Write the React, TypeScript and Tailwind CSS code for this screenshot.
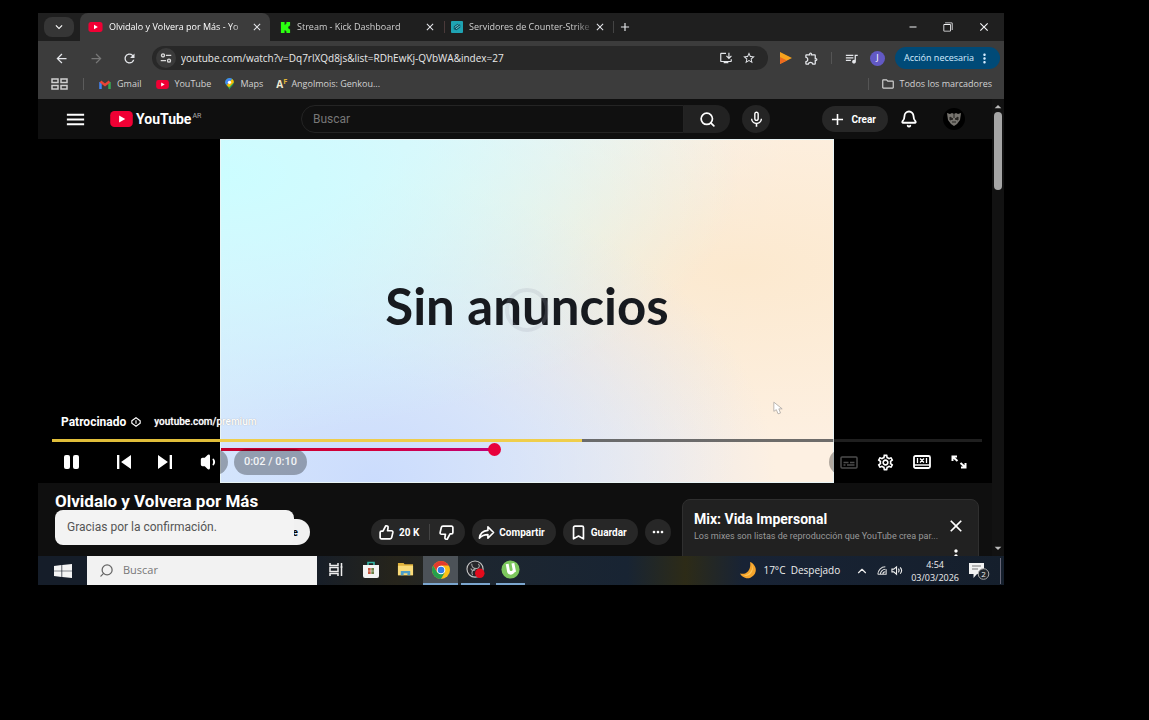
import type { ReactNode } from 'react'
import {
  MdAdd,
  MdArrowBack,
  MdArrowDropDown,
  MdArrowDropUp,
  MdArrowForward,
  MdClose,
  MdFilterNone,
  MdInstallDesktop,
  MdKeyboardArrowDown,
  MdMenu,
  MdMicNone,
  MdMoreHoriz,
  MdMoreVert,
  MdOutlineExtension,
  MdOutlineFolder,
  MdOutlineSettings,
  MdQueueMusic,
  MdRefresh,
  MdRemove,
  MdSkipNext,
  MdSkipPrevious,
  MdStarBorder,
} from 'react-icons/md'
import { Bell, Bookmark, ChevronUp, Search, Volume1 } from 'lucide-react'

function YouTubeMark({ className }: { className: string }) {
  return (
    <svg viewBox="0 0 24 17" className={className} aria-hidden="true">
      <rect width="24" height="17" rx="4.500" fill="#f00034" />
      <path d="M9.500 4.800v7.400L16 8.500z" fill="#fff" />
    </svg>
  )
}

function KickIcon() {
  return (
    <svg viewBox="0 0 12 12" className="size-[11px] shrink-0" aria-hidden="true">
      <path d="M1 0h4v3h1V2h1V0h4v4h-1v1H9v2h1v1h1v4H7v-2H6V9H5v3H1z" fill="#2bff10" />
    </svg>
  )
}

function ServerIcon() {
  return (
    <svg viewBox="0 0 13 13" className="size-3 shrink-0" aria-hidden="true">
      <rect width="13" height="13" rx="1" fill="#1fa3b3" />
      <path d="M3 6l4-3 3 1v3L6 10 3 9z" fill="#0a5263" />
      <path d="M4 7l4-3M5.500 8.500l4-3" stroke="#8be6ee" strokeWidth=".9" />
    </svg>
  )
}

function AppsIcon() {
  return (
    <svg viewBox="0 0 17 12" className="w-[17px]" fill="none" stroke="#d0d0d0" strokeWidth="1.500" aria-hidden="true">
      <path d="M1 1h6v3.500H1zM10 1h6v3.500h-6zM1 7.500h6V11H1zM10 7.500h6V11h-6z" />
    </svg>
  )
}

function TuneIcon() {
  return (
    <svg viewBox="0 0 16 16" className="size-3 shrink-0" fill="none" stroke="#dadada" strokeWidth="1.800" aria-hidden="true">
      <circle cx="4" cy="4.500" r="2" />
      <path d="M8 4.500h7M1 11.500h7" />
      <circle cx="12" cy="11.500" r="2" />
    </svg>
  )
}

function GmailIcon() {
  return (
    <svg viewBox="0 0 24 18" className="h-[9px] w-3" fill="none" strokeWidth="5" aria-hidden="true">
      <path d="M3 18V4" stroke="#4285f4" />
      <path d="M21 18V4" stroke="#34a853" />
      <path d="M3 3l9 7 9-7" stroke="#ea4335" />
    </svg>
  )
}

function MapsIcon() {
  return (
    <svg viewBox="0 0 16 22" className="h-3 w-[9px]" aria-hidden="true">
      <path d="M8 22C7 16 0 14 0 8a8 8 0 0 1 16 0c0 6-7 8-8 14z" fill="#34a853" />
      <path d="M0 8a8 8 0 0 1 13-6L3 13C1 11 0 10 0 8z" fill="#4285f4" />
      <path d="M3 13L13 2a8 8 0 0 1 3 6L7 17z" fill="#fbbc04" />
      <circle cx="8" cy="8" r="3" fill="#fff" />
    </svg>
  )
}

function ThumbIcon({ className = '' }: { className?: string }) {
  return (
    <svg viewBox="0 0 24 24" className={`size-[17px] ${className}`} fill="none" stroke="#fff" strokeWidth="2.400" strokeLinejoin="round" aria-hidden="true">
      <path d="M7 10l4-7.500c2.300-.3 3.600 1 3.200 3L13.500 9.500H19a2 2 0 0 1 2 2.400l-1.600 7a2.500 2.500 0 0 1-2.400 2H5a2 2 0 0 1-2-2V12a2 2 0 0 1 2-2z" />
    </svg>
  )
}

function ShareIcon() {
  return (
    <svg viewBox="0 0 24 24" className="size-[17px]" fill="none" stroke="#fff" strokeWidth="2.300" strokeLinejoin="round" aria-hidden="true">
      <path d="M14 4l8 8-8 8v-5c-5 0-8.500 1-12 5 .8-6.500 5-10.500 12-11z" />
    </svg>
  )
}

function CaptionsIcon() {
  return (
    <svg viewBox="0 0 18 13" className="w-[18px]" fill="none" stroke="#4c4c4c" strokeWidth="1.500" aria-hidden="true">
      <rect x="1" y="1" width="16" height="11" rx="1" />
      <path d="M3.500 6.500h5M10 6.500h4.500M3.500 9h2M7 9h7.500" />
    </svg>
  )
}

function TheaterIcon() {
  return (
    <svg viewBox="0 0 18 14" className="w-[18px]" fill="none" stroke="#fff" strokeWidth="1.800" aria-hidden="true">
      <rect x="1" y="1" width="16" height="12" rx="1.500" />
      <path d="M1 10h16" strokeWidth="1.400" />
      <path d="M4.500 3v5M13.500 3v5M7 3.500l4 4M11 3.500l-4 4" strokeWidth="1.300" />
    </svg>
  )
}

function FullscreenIcon() {
  return (
    <svg viewBox="0 0 16 14" className="w-4" fill="none" stroke="#fff" strokeWidth="2" aria-hidden="true">
      <path d="M1.500 6V1.500H6M2 2l4.500 4M14.500 8v4.500H10M14 12L9.500 8" />
    </svg>
  )
}

function WindowsIcon() {
  return (
    <svg viewBox="0 0 18 14" className="w-[18px]" fill="#f4f4f4" aria-hidden="true">
      <path d="M0 2l7.500-1v5.700H0zM8.200.9L18 0v6.700H8.200zM0 7.300h7.500V13L0 12zM8.200 7.300H18V14l-9.800-.9z" />
    </svg>
  )
}

function TaskViewIcon() {
  return (
    <svg viewBox="0 0 14 13" className="w-[14px]" fill="none" stroke="#eee" strokeWidth="1.500" aria-hidden="true">
      <path d="M1 0v2.500h8V0M1 13v-2.500h8V13M12.500 0v13M11.500 4h2" />
      <rect x="1" y="4.500" width="8" height="4" />
    </svg>
  )
}

function StoreIcon() {
  return (
    <svg viewBox="0 0 18 18" className="size-[18px]" aria-hidden="true">
      <path d="M6 5V1.500h6V5" fill="none" stroke="#35b5a5" strokeWidth="1.600" />
      <path d="M1 4h16v11q0 2-2 2H3q-2 0-2-2z" fill="#f3f3f3" />
      <path d="M6 7h2.700v2.700H6zM6 10.300h2.700V13H6z" fill="#c8553d" />
      <path d="M9.300 7H12v2.700H9.300zM9.300 10.300H12V13H9.300z" fill="#6b7f45" />
    </svg>
  )
}

function ExplorerIcon() {
  return (
    <svg viewBox="0 0 18 15" className="w-[17px]" aria-hidden="true">
      <path d="M1 1h6l1 1.500h9V14H1z" fill="#e0b33c" />
      <path d="M1 4h16v10H1z" fill="#fadb78" />
      <path d="M4 9.500h10V14h-3v-2H7v2H4z" fill="#4f9fc8" />
    </svg>
  )
}

function ChromeIcon() {
  return (
    <svg viewBox="0 0 20 20" className="size-[18px]" aria-hidden="true">
      <circle cx="10" cy="10" r="10" fill="#fbc116" />
      <path d="M1.340 5A10 10 0 0 1 18.660 5H10L6 12.500z" fill="#e33b2e" />
      <path d="M1.340 5A10 10 0 0 0 10 20l4.300-7.500L10 14.500 5.700 12.500z" fill="#269f4c" />
      <circle cx="10" cy="10" r="4.800" fill="#fff" />
      <circle cx="10" cy="10" r="3.700" fill="#2f7de8" />
    </svg>
  )
}

function ObsIcon() {
  return (
    <svg viewBox="0 0 20 20" className="size-[19px]" aria-hidden="true">
      <circle cx="9.500" cy="9.500" r="8.500" fill="#26262a" stroke="#c4c4c4" strokeWidth="1.200" />
      <path d="M6 4c0 4 2 5 5 5 3 0 4-3 2-5M10 9c-3 1-5 4-3 7M5 9c1 2 3 3 5 1" fill="none" stroke="#a8a8a8" strokeWidth="1.100" />
      <circle cx="14.500" cy="14" r="5" fill="#e30b1c" />
    </svg>
  )
}

function TorrentIcon() {
  return (
    <svg viewBox="0 0 20 20" className="size-[19px]" aria-hidden="true">
      <circle cx="10" cy="10" r="9.500" fill="#7cc75d" />
      <path d="M5 4.500l3-.6 1.200 6.600c.3 1.700 3.300 1.200 3-.6L11 3.600l3-.5 1.800 8.900-2 1.500c-1 2.500-6.300 3-7.300-.8z" fill="#fff" />
    </svg>
  )
}

function MoonIcon() {
  return (
    <svg viewBox="0 0 17 17" className="size-[17px]" aria-hidden="true">
      <path d="M10 0a8.300 8.300 0 1 1-10 11.500C7 13.500 11.500 7 10 0z" fill="#f6a52c" />
      <path d="M11.500 1c3 6-2 12-8 12.500 7 2.500 12-6 8-12.500z" fill="#ffc85a" />
    </svg>
  )
}

function NetworkIcon() {
  return (
    <svg viewBox="0 0 12 11" className="w-[10px]" fill="none" stroke="#ddd" strokeWidth="1.300" aria-hidden="true">
      <path d="M1 10a9 9 0 0 1 9-9M4 10a6 6 0 0 1 6-6M7 10a3 3 0 0 1 3-3M1 10h10V4" />
    </svg>
  )
}

function SpeakerIcon() {
  return (
    <svg viewBox="0 0 13 12" className="w-3" fill="none" stroke="#eee" strokeWidth="1.200" aria-hidden="true">
      <path d="M1 4.500h2L6 2v8L3 7.500H1zM8 4q1.500 2 0 4M10 2.500q3 3.500 0 7" />
    </svg>
  )
}

function NoticeIcon() {
  return (
    <svg viewBox="0 0 21 18" className="w-[21px]" aria-hidden="true">
      <path d="M0 1h15v11H8l-3.500 4v-4H0z" fill="#f2f2f2" />
      <path d="M3 4h9M3 7h6" stroke="#777" />
      <circle cx="14.500" cy="12" r="5.300" fill="#20262c" stroke="#a8a8a8" />
      <text x="12.300" y="15" fontSize="8" fill="#eee" fontFamily="Open Sans">2</text>
    </svg>
  )
}

interface TabProps {
  icon: ReactNode
  title: string
  className?: string
}

function Tab({ icon, title, className = '' }: TabProps) {
  return (
    <div className={`flex h-[28px] items-center ${className}`}>
      <button type="button" className="flex min-w-0 flex-1 items-center gap-[6px]">
        {icon}
        <span className="min-w-0 flex-1 overflow-hidden text-left whitespace-nowrap [mask-image:linear-gradient(to_right,black_85%,transparent)]">
          {title}
        </span>
      </button>
      <button type="button" aria-label="Cerrar pestaña" className="text-xs text-gray-200">
        <MdClose />
      </button>
    </div>
  )
}

function TabStrip() {
  return (
    <div className="flex h-[28px] items-center bg-[#1f1f1f] text-[9px] text-[#cfcfcf]">
      <button type="button" aria-label="Buscar pestañas" className="ml-[6px] flex h-5 w-[30px] items-center justify-center rounded-lg bg-[#363636] text-sm text-white">
        <MdKeyboardArrowDown />
      </button>
      <Tab
        icon={<YouTubeMark className="h-[10px] w-[15px] shrink-0" />}
        title="Olvidalo y Volvera por Más - Yo"
        className="ml-[6px] w-[190px] rounded-t-lg bg-[#3c3c3c] pr-[7px] pl-2 text-white"
      />
      <Tab icon={<KickIcon />} title="Stream - Kick Dashboard" className="w-[174px] pr-2 pl-[10px]" />
      <span className="h-3 w-px bg-[#4a3a3a]" />
      <Tab icon={<ServerIcon />} title="Servidores de Counter-Strike 1" className="w-[168px] pr-[7px] pl-[6px]" />
      <span className="h-3 w-px bg-[#444]" />
      <button type="button" aria-label="Nueva pestaña" className="ml-1 text-sm text-gray-200">
        <MdAdd />
      </button>
      <div className="ml-auto flex items-center gap-6 pr-[13px] text-xs text-gray-100">
        <button type="button" aria-label="Minimizar"><MdRemove /></button>
        <button type="button" aria-label="Restaurar" className="rotate-180 text-[10px]"><MdFilterNone stroke="currentColor" /></button>
        <button type="button" aria-label="Cerrar" className="text-sm"><MdClose /></button>
      </div>
    </div>
  )
}

function Toolbar() {
  return (
    <div className="flex h-[34px] items-center bg-[#3c3c3c] pr-1 pl-4 text-[15px] text-gray-200">
      <button type="button" aria-label="Atrás"><MdArrowBack /></button>
      <button type="button" aria-label="Adelante" className="ml-5 text-[#777]"><MdArrowForward /></button>
      <button type="button" aria-label="Recargar" className="ml-[18px]"><MdRefresh /></button>
      <div className="ml-[15px] flex h-6 flex-1 items-center rounded-full bg-[#282828] pr-3 pl-1">
        <span className="flex size-5 items-center justify-center rounded-full bg-[#3a3a3a]"><TuneIcon /></span>
        <input
          aria-label="Dirección"
          defaultValue="youtube.com/watch?v=Dq7rlXQd8js&list=RDhEwKj-QVbWA&index=27"
          className="ml-[5px] min-w-0 flex-1 bg-transparent text-[10px] text-[#e8e8e8] outline-none"
        />
        <button type="button" aria-label="Instalar YouTube" className="text-sm"><MdInstallDesktop /></button>
        <button type="button" aria-label="Añadir a marcadores" className="ml-[9px] text-sm"><MdStarBorder /></button>
      </div>
      <button type="button" aria-label="Extensión de vídeo" className="ml-3">
        <svg viewBox="0 0 12 12" className="size-3" aria-hidden="true">
          <path d="M0 0l12 6-12 6z" fill="#f6a21e" />
          <path d="M0 12V5l7 3.500z" fill="#ee6a1e" />
        </svg>
      </button>
      <button type="button" aria-label="Extensiones" className="ml-3"><MdOutlineExtension /></button>
      <span className="ml-3 h-3 w-px bg-[#555]" />
      <button type="button" aria-label="Controles multimedia" className="ml-3"><MdQueueMusic /></button>
      <button type="button" aria-label="Perfil" className="ml-[11px] flex size-[15px] items-center justify-center rounded-full bg-[#6259c4] text-[9px] text-white">J</button>
      <button type="button" className="ml-[10px] flex h-[22px] w-[105px] items-center justify-between rounded-full bg-[#004a77] pr-2 pl-[9px] text-[9px] whitespace-nowrap text-[#d5ecff]">
        Acción necesaria
        <MdMoreVert className="text-[15px]" />
      </button>
    </div>
  )
}

function BookmarksBar() {
  return (
    <nav className="flex h-6 items-center bg-[#3c3c3c] pr-3 pb-[6px] pl-[13px] text-[9px] text-[#d2d2d2]">
      <button type="button" aria-label="Grupos de pestañas"><AppsIcon /></button>
      <span className="ml-[15px] h-3 w-px bg-[#5c5c5c]" />
      <a href="#gmail" className="ml-[15px] flex items-center gap-[6px]"><GmailIcon />Gmail</a>
      <a href="#youtube" className="ml-[15px] flex items-center gap-[5px]"><YouTubeMark className="h-[9px] w-[13px]" />YouTube</a>
      <a href="#maps" className="ml-[14px] flex items-center gap-[6px]"><MapsIcon />Maps</a>
      <a href="#angolmois" className="ml-[13px] flex items-center gap-1">
        <span className="text-[10px] font-bold text-[#f1ead0]">A<sup className="text-[#e0b437]">F</sup></span>
        Angolmois: Genkou...
      </a>
      <span className="ml-auto h-3 w-px bg-[#555]" />
      <a href="#marcadores" className="ml-3 flex items-center gap-[5px]"><MdOutlineFolder className="text-sm" />Todos los marcadores</a>
    </nav>
  )
}

function Masthead() {
  return (
    <header className="flex h-10 items-center bg-[#0f0f0f] font-[Roboto,sans-serif] text-white">
      <button type="button" aria-label="Menú" className="ml-[26px] text-[23px]"><MdMenu /></button>
      <a href="#inicio" className="ml-[22px] flex w-[192px] items-center">
        <YouTubeMark className="h-4 w-[25px]" />
        <span className="ml-[2px] text-sm leading-5 font-bold">YouTube</span>
        <sup className="ml-px text-[7px] text-[#aaa]">AR</sup>
      </a>
      <form className="flex h-7 flex-1" onSubmit={(e) => e.preventDefault()}>
        <input aria-label="Buscar" placeholder="Buscar" className="min-w-0 flex-1 rounded-l-full border border-[#242424] bg-[#101010] pl-[11px] text-xs text-white outline-none placeholder:text-[#777]" />
        <button type="submit" aria-label="Buscar" className="flex w-[46px] items-center justify-center rounded-r-full bg-[#222]">
          <Search size={17} strokeWidth={2.4} />
        </button>
      </form>
      <button type="button" aria-label="Buscar por voz" className="ml-3 flex size-7 items-center justify-center rounded-full bg-[#242424] text-[19px]"><MdMicNone /></button>
      <button type="button" className="ml-[52px] flex h-[26px] items-center gap-1 rounded-full bg-[#272727] pr-3 pl-[6px] text-[10px] font-bold">
        <MdAdd className="text-[19px]" />
        Crear
      </button>
      <button type="button" aria-label="Notificaciones" className="ml-3"><Bell size={18} strokeWidth={2.4} /></button>
      <button type="button" aria-label="Cuenta" className="mr-[27px] ml-[25px] flex size-[22px] items-center justify-center rounded-full bg-black">
        <svg viewBox="0 0 16 16" className="size-4" aria-hidden="true">
          <path d="M1 2l3 1 2-1 2 1 2-1 2 1 3-1-1 7-3 4-3 2-3-2-3-4z" fill="#77746f" />
          <path d="M4 6l3 2-3 1zM12 6L9 8l3 1zM6 11h4M8 3v4" stroke="#272522" fill="#272522" />
        </svg>
      </button>
    </header>
  )
}

function Player() {
  return (
    <section className="relative flex h-[344px] bg-black font-[Roboto,sans-serif] text-white">
      <div className="w-[182px]" />
      <div className="relative flex flex-1 items-center justify-center border border-[#e9f4f5] bg-[radial-gradient(ellipse_at_0%_10%,#ccfdff_0%,#ccfdff00_60%),radial-gradient(ellipse_at_25%_100%,#cbdcfd_0%,#cbdcfd00_62%),radial-gradient(ellipse_at_85%_38%,#fce9cf_0%,#fce9cf00_60%),linear-gradient(100deg,#e2f2fb_15%,#f0f2f2_50%,#fdf0e2_85%)]">
        <h2 className="pb-3 font-[Lato,sans-serif] text-[51px] leading-none font-bold text-[#171a1f]">Sin anuncios</h2>
        <span className="absolute top-[148px] size-11 rounded-full border-4 border-gray-400/20" />
        <svg viewBox="0 0 12 16" className="absolute right-[50px] bottom-[67px] h-[14px] w-[10px]" aria-hidden="true">
          <path d="M1 1v11l3-2 2 5 3-1-2-5h4z" fill="#fff" stroke="#b0a9a4" />
        </svg>
        <input
          type="range"
          aria-label="Progreso del vídeo"
          min={0}
          max={1000}
          defaultValue={446}
          className="absolute bottom-[26px] left-0 h-[13px] w-full appearance-none bg-[linear-gradient(90deg,#c4002c,#d4003c_25%,#c00078_44%,transparent_44%)] bg-[length:100%_3px] bg-center bg-no-repeat [&::-webkit-slider-thumb]:size-[13px] [&::-webkit-slider-thumb]:appearance-none [&::-webkit-slider-thumb]:rounded-full [&::-webkit-slider-thumb]:bg-[#e8003c]"
        />
      </div>
      <div className="w-[158px]" />

      {/* ad overlay and player controls */}
      <div className="pointer-events-none absolute inset-x-0 bottom-0 pb-2">
        <div className="ml-[23px] flex items-center text-xs leading-4 font-bold">
          Patrocinado
          <svg viewBox="0 0 12 12" className="ml-[5px] size-[10px]" fill="none" stroke="#fff" strokeWidth="1.400" aria-hidden="true">
            <path d="M1 4.500L6 1l5 3.500v3L6 11 1 7.500z" />
            <path d="M6 4v4" />
          </svg>
          <a href="#premium" className="ml-[13px] text-[10px] font-medium text-white [text-shadow:0_0_1px_#999]">youtube.com/premium</a>
        </div>
        <div role="progressbar" aria-label="Progreso del anuncio" aria-valuenow={57} className="mt-[9px] mr-[10px] ml-[14px] h-[3px] bg-[#666]/30">
          <div className="flex h-full">
            <div className="w-[57%] bg-[#f5cf3d]/90" />
            <div className="w-[27%] bg-[#555]/80" />
          </div>
        </div>
        <div className="mt-[7px] flex h-[26px] items-center">
          <button type="button" aria-label="Pausa" className="ml-[26px] flex gap-[3px]">
            <span className="h-[14px] w-[6px] rounded-xs bg-white" />
            <span className="h-[14px] w-[6px] rounded-xs bg-white" />
          </button>
          <button type="button" aria-label="Anterior" className="ml-[31px] text-[28px]"><MdSkipPrevious /></button>
          <button type="button" aria-label="Siguiente" className="ml-[13px] text-[28px]"><MdSkipNext /></button>
          <button type="button" aria-label="Volumen" className="ml-[13px] flex h-[26px] w-9 items-center justify-center rounded-full bg-black/30">
            <Volume1 size={20} fill="white" strokeWidth={2} />
          </button>
          <span className="ml-[6px] flex h-[26px] w-[73px] items-center justify-center rounded-full bg-black/30 text-[11px] font-medium text-gray-100">0:02 / 0:10</span>
          <div className="mr-[19px] ml-auto flex h-[26px] items-center gap-[18px] rounded-full bg-black/30 pr-[6px] pl-[11px]">
            <button type="button" aria-label="Subtítulos"><CaptionsIcon /></button>
            <button type="button" aria-label="Configuración" className="text-[19px]"><MdOutlineSettings /></button>
            <button type="button" aria-label="Modo cine"><TheaterIcon /></button>
            <button type="button" aria-label="Pantalla completa" className="ml-[2px]"><FullscreenIcon /></button>
          </div>
        </div>
      </div>
    </section>
  )
}

function WatchInfo() {
  return (
    <section className="flex h-[73px] items-start overflow-hidden bg-[#0f0f0f] pr-[13px] pl-[17px] font-[Roboto,sans-serif] text-white">
      <div className="relative flex-1">
        <h1 className="pt-2 text-[17px] leading-5 font-bold">Olvidalo y Volvera por Más</h1>
        <div className="mt-2 flex h-[26px] items-center gap-[7px] text-[10px] font-bold">
          <button type="button" className="mr-[54px] flex h-full w-[255px] items-center justify-end rounded-full bg-[#f1f1f1] pr-3 text-black">e</button>
          <div className="flex h-full items-center rounded-full bg-[#272727]">
            <button type="button" className="flex items-center gap-1 pl-[7px]"><ThumbIcon />20 K</button>
            <span className="ml-[10px] h-4 w-px bg-[#444]" />
            <button type="button" aria-label="No me gusta" className="pr-[10px] pl-2"><ThumbIcon className="rotate-180" /></button>
          </div>
          <button type="button" className="flex h-full items-center gap-1 rounded-full bg-[#272727] pr-[11px] pl-[6px]"><ShareIcon />Compartir</button>
          <button type="button" className="flex h-full items-center gap-1 rounded-full bg-[#272727] pr-[11px] pl-[7px]"><Bookmark size={17} strokeWidth={2.4} />Guardar</button>
          <button type="button" aria-label="Más acciones" className="flex size-[26px] items-center justify-center rounded-full bg-[#272727] text-base"><MdMoreHoriz /></button>
        </div>
        <div role="status" className="absolute top-[27px] left-0 flex h-[35px] w-[239px] items-center rounded-lg bg-[#f3f3f3] pb-[2px] pl-3 text-xs text-[#555]">
          Gracias por la confirmación.
        </div>
      </div>
      <aside className="mt-4 flex h-20 w-[297px] justify-between rounded-lg border border-[#2f2f2f] bg-[#212121] pt-[10px] pr-3 pl-[11px]">
        <div>
          <h2 className="text-sm leading-[18px] font-bold">Mix: Vida Impersonal</h2>
          <p className="text-[9px] leading-4 whitespace-nowrap text-[#9a9a9a]">Los mixes son listas de reproducción que YouTube crea par...</p>
        </div>
        <div className="flex flex-col items-center text-xl">
          <button type="button" aria-label="Cerrar lista" className="mt-[6px]"><MdClose /></button>
          <button type="button" aria-label="Menú de la lista" className="mt-[10px]"><MdMoreVert /></button>
        </div>
      </aside>
    </section>
  )
}

function Scrollbar() {
  return (
    <div className="flex w-3 flex-col items-center bg-[#121212] text-base text-[#bbb]">
      <MdArrowDropUp className="shrink-0" />
      <span className="-mt-[3px] h-[78px] w-2 rounded-full bg-[#a5a5a5]" />
      <MdArrowDropDown className="mt-auto shrink-0" />
    </div>
  )
}

interface TaskButtonProps {
  label: string
  running?: boolean
  active?: boolean
  children: ReactNode
}

function TaskButton({ label, running, active, children }: TaskButtonProps) {
  return (
    <button
      type="button"
      aria-label={label}
      className={`flex h-full items-center justify-center border-b-2 ${running ? 'border-[#7ba6cf]' : 'border-transparent'} ${active ? 'w-[35px] bg-[#4c5258]' : 'mx-[3px] w-[29px]'}`}
    >
      {children}
    </button>
  )
}

function Taskbar() {
  return (
    <footer className="flex h-[29px] items-center bg-[linear-gradient(90deg,#151d29_0%,#151d29_28%,#26241b_37%,#1d2630_46%,#182433_61%,#2d2b17_67%,#182335_73%,#151f2c_100%)] text-[10px] text-[#eee]">
      <button type="button" aria-label="Inicio" className="flex w-[49px] justify-center"><WindowsIcon /></button>
      <label className="mr-px flex h-full w-[230px] items-center gap-[9px] bg-[#f2f2f2] pl-3 text-[#666]">
        <Search size={15} strokeWidth={2} className="-scale-x-100" />
        <input aria-label="Buscar en Windows" placeholder="Buscar" className="min-w-0 flex-1 bg-transparent text-[11px] outline-none placeholder:text-[#777]" />
      </label>
      <TaskButton label="Vista de tareas"><TaskViewIcon /></TaskButton>
      <TaskButton label="Microsoft Store"><StoreIcon /></TaskButton>
      <TaskButton label="Explorador"><ExplorerIcon /></TaskButton>
      <TaskButton label="Chrome" running active><ChromeIcon /></TaskButton>
      <TaskButton label="OBS" running><ObsIcon /></TaskButton>
      <TaskButton label="uTorrent" running><TorrentIcon /></TaskButton>
      <div className="ml-auto flex items-center pr-[3px]">
        <MoonIcon />
        <span className="ml-[6px] whitespace-pre">17°C  Despejado</span>
        <ChevronUp size={14} className="ml-[15px]" />
        <span className="ml-2"><NetworkIcon /></span>
        <span className="ml-1"><SpeakerIcon /></span>
        <time className="ml-2 text-center text-[9px] leading-[13px]">
          <span className="block">4:54</span>
          <span className="block">03/03/2026</span>
        </time>
        <span className="ml-[10px]"><NoticeIcon /></span>
        <span className="ml-[10px] h-[26px] w-px bg-[#667]" />
      </div>
    </footer>
  )
}

export default function App() {
  return (
    <div className="min-h-screen bg-black pt-[13px] pr-[145px] pl-[38px] font-['Open_Sans',sans-serif]">
      <TabStrip />
      <Toolbar />
      <BookmarksBar />
      <div className="flex">
        <main className="min-w-0 flex-1">
          <Masthead />
          <Player />
          <WatchInfo />
        </main>
        <Scrollbar />
      </div>
      <Taskbar />
    </div>
  )
}
